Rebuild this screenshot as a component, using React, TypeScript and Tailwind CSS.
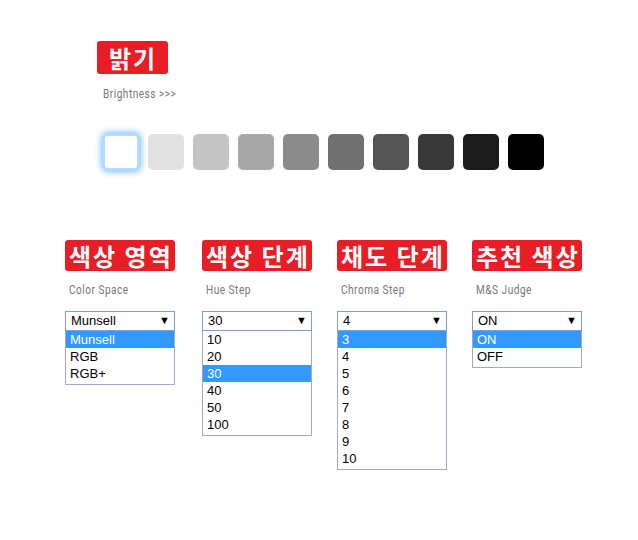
import React from 'react'

const swatches = ['#ffffff', '#e1e1e1', '#c4c4c4', '#a8a8a8', '#8c8c8c', '#707070', '#545454', '#383838', '#1c1c1c', '#000000']

const sectionData = [
  { title: '색상 영역', sub: 'Color Space', value: 'Munsell', options: ['Munsell', 'RGB', 'RGB+'], selected: 'Munsell', width: 'w-[137px]' },
  { title: '색상 단계', sub: 'Hue Step', value: '30', options: ['10', '20', '30', '40', '50', '100'], selected: '30', width: 'w-[135px]' },
  { title: '채도 단계', sub: 'Chroma Step', value: '4', options: ['3', '4', '5', '6', '7', '8', '9', '10'], selected: '3', width: 'w-[135px]' },
  { title: '추천 색상', sub: 'M&S Judge', value: 'ON', options: ['ON', 'OFF'], selected: 'ON', width: 'w-[135px]' }
]

const korean = { fontFamily: '"Noto Sans CJK KR", "Noto Sans", sans-serif' }
const narrow = { fontFamily: '"Roboto", "Liberation Sans", sans-serif' }
const arial = { fontFamily: '"Liberation Sans", Arial, sans-serif' }

const Badge: React.FC<{ text: string; className?: string }> = ({ text, className = '' }) => (
  <div
    className={`inline-flex items-center rounded-[3px] bg-[#e81d25] text-[24px] font-bold tracking-[2px] text-white leading-none ${className}`}
    style={korean}
  >
    {text}
  </div>
)

// small condensed grey caption
const Caption: React.FC<{ text: string; className?: string }> = ({ text, className = '' }) => (
  <div className={`origin-left scale-x-[0.84] whitespace-nowrap text-[12px] tracking-[0.6px] text-[#777777] ${className}`} style={narrow}>
    {text}
  </div>
)

const OpenSelect: React.FC<{ value: string; options: string[]; selected: string }> = ({ value, options, selected }) => (
  <div className="w-[110px] text-[13px] text-black" style={arial}>
    <div className="flex h-[20px] items-center justify-between border border-[#7f9fd0] bg-white pl-[5px] pr-[4px]">
      <span>{value}</span>
      <span className="text-[11px]">▼</span>
    </div>
    <div className="border border-t-0 border-[#9eabc0] bg-white pb-[2px]">
      {options.map(opt => (
        <div
          key={opt}
          className={`h-[17px] pl-[4px] leading-[17px] ${opt === selected ? 'bg-[#3399ff] text-white' : ''}`}
        >
          {opt}
        </div>
      ))}
    </div>
  </div>
)

export default function App() {
  return (
    <div className="min-h-[540px] w-[638px] bg-white pt-[41px]">
      {/* Brightness */}
      <div className="pl-[97px]">
        <Badge text="밝기" className="h-[33px] pl-[12px] pr-[11px]" />
        <Caption text="Brightness >>>" className="ml-[6px] mt-[11px]" />
        <div className="ml-[6px] mt-[31px] flex gap-[9px]">
          {swatches.map((c, i) => (
            <div
              key={c}
              className={`h-[36px] w-[36px] rounded-[5px] ${i === 0 ? 'border-2 border-[#b8dcff] shadow-[0_0_6px_2px_#7fbfff]' : ''}`}
              style={{ backgroundColor: c }}
            />
          ))}
        </div>
      </div>

      {/* Options */}
      <div className="mt-[70px] flex pl-[65px]">
        {sectionData.map(s => (
          <div key={s.title} className={s.width}>
            <Badge text={s.title} className="h-[31px] pl-[4px] pr-[2px]" />
            <Caption text={s.sub} className="ml-[4px] mt-[9px]" />
            <div className="mt-[12px]">
              <OpenSelect value={s.value} options={s.options} selected={s.selected} />
            </div>
          </div>
        ))}
      </div>
    </div>
  )
}
